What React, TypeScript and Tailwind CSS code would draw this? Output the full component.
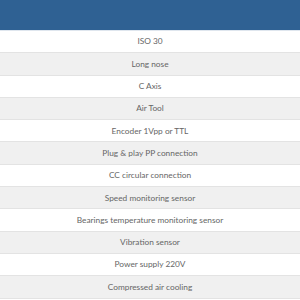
const rows = [
  "ISO 30",
  "Long nose",
  "C Axis",
  "Air Tool",
  "Encoder 1Vpp or TTL",
  "Plug & play PP connection",
  "CC circular connection",
  "Speed monitoring sensor",
  "Bearings temperature monitoring sensor",
  "Vibration sensor",
  "Power supply 220V",
  "Compressed air cooling",
]

export default function App() {
  return (
    <div className="w-[300px] h-[300px] overflow-hidden bg-white font-['Lato','Liberation_Sans',sans-serif]">
      {/* Header */}
      <div className="h-[31px] bg-[#2f6193] border-b border-[#dfe6ee]" />
      {/* Rows */}
      <div className="flex flex-col">
        {rows.map((r, i) => (
          <div
            key={r}
            className={`h-[22.3px] flex items-center justify-center border-b border-[#e3e3e3] text-[8.3px] text-[#666] ${
              i % 2 === 0 ? "bg-white" : "bg-[#f0f0f0]"
            }`}
          >
            {r}
          </div>
        ))}
      </div>
    </div>
  )
}
